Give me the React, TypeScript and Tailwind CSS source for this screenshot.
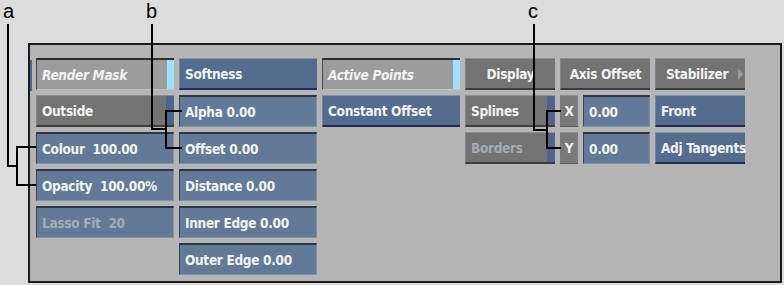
import React from "react";

type Kind = "field" | "button" | "gray" | "grayField" | "label";

function Cell({
  text,
  kind,
  w,
  italic,
  dim,
  strip,
  center,
  arrow,
}: {
  text: string;
  kind: Kind;
  w: string;
  italic?: boolean;
  dim?: boolean;
  strip?: "cyan" | "blue";
  center?: boolean;
  arrow?: boolean;
}) {
  const base =
    kind === "field"
      ? "bg-[#627a97] border-t-2 border-l border-t-[#30363f] border-l-[#3c4350] border-b border-r border-b-[#7f92a9] border-r-[#7f92a9]"
      : kind === "button"
      ? "bg-[#546d8f] border-t border-t-[#8194ae] border-b-2 border-b-[#262a58] border-l border-l-[#6f84a2]"
      : kind === "grayField"
      ? "bg-[#9c9c9c] border-t-2 border-l border-t-[#2e2e2e] border-l-[#4a4a4a] border-b border-b-[#c2c2c2]"
      : kind === "label"
      ? "bg-[#7a7a7a] border-t border-t-[#8c8c8c] border-b border-b-[#5a5a5a]"
      : "bg-[#737373] border-t border-t-[#8e8e8e] border-b-2 border-b-[#3e3e3e] border-l border-l-[#858585]";
  return (
    <div className={`relative flex h-[32px] items-center ${w} ${base}`}>
      <span
        className={`flex-1 whitespace-pre text-[13.5px] font-bold leading-[18px] tracking-[-0.3px] ${
          center ? "text-center" : "pl-[5px]"
        } ${italic ? "italic" : ""} ${dim ? "text-[#a3acb7]" : "text-[#f2f2f2]"}`}
        style={{ fontFamily: '"DejaVu Sans Condensed", "DejaVu Sans", sans-serif', fontStretch: "condensed" }}
      >
        {text}
      </span>
      {arrow && (
        <span className="mr-[2px] h-0 w-0 border-y-[6px] border-l-[5px] border-y-transparent border-l-[#9a9a9a]" />
      )}
      {strip === "cyan" && <div className="h-full w-[7px] bg-[#9fe2ff]" />}
      {strip === "blue" && <div className="h-full w-[8px] bg-[#4f6489]" />}
    </div>
  );
}

export default function App() {
  return (
    <div
      className="relative h-[285px] w-[784px] overflow-hidden bg-[#dcdcdc] pl-[28px] pt-[43px]"
      style={{ fontFamily: '"Liberation Sans", Arial, sans-serif' }}
    >
      <div className="relative flex h-[240px] w-[754px] gap-[5px] border-2 border-[#1b1b1b] bg-[#b5b5b5] pl-[6px] pt-[13px]">
        <div className="absolute left-0 top-[15px] h-[31px] w-[2px] bg-[#4f6489]" />

        <div className="flex flex-col gap-[5px]">
          <Cell text="Render Mask" kind="grayField" w="w-[138px]" italic strip="cyan" />
          <Cell text="Outside" kind="gray" w="w-[138px]" strip="blue" />
          <Cell text="Colour  100.00" kind="field" w="w-[138px]" />
          <Cell text="Opacity  100.00%" kind="field" w="w-[138px]" />
          <Cell text="Lasso Fit  20" kind="field" w="w-[138px]" dim />
        </div>

        <div className="flex flex-col gap-[5px]">
          <Cell text="Softness" kind="button" w="w-[138px]" />
          <Cell text="Alpha 0.00" kind="field" w="w-[138px]" />
          <Cell text="Offset 0.00" kind="field" w="w-[138px]" />
          <Cell text="Distance 0.00" kind="field" w="w-[138px]" />
          <Cell text="Inner Edge 0.00" kind="field" w="w-[138px]" />
          <Cell text="Outer Edge 0.00" kind="field" w="w-[138px]" />
        </div>

        <div className="flex flex-col gap-[5px]">
          <Cell text="Active Points" kind="grayField" w="w-[138px]" italic strip="cyan" />
          <Cell text="Constant Offset" kind="button" w="w-[138px]" />
        </div>

        <div className="flex flex-col gap-[5px]">
          <Cell text="Display" kind="gray" w="w-[90px]" center />
          <Cell text="Splines" kind="gray" w="w-[90px]" strip="blue" />
          <Cell text="Borders" kind="gray" w="w-[90px]" strip="blue" dim />
        </div>

        <div className="flex flex-col gap-[5px]">
          <Cell text="Axis Offset" kind="gray" w="w-[90px]" center />
          <div className="flex gap-[5px]">
            <Cell text="X" kind="label" w="w-[18px]" center />
            <Cell text="0.00" kind="field" w="w-[67px]" />
          </div>
          <div className="flex gap-[5px]">
            <Cell text="Y" kind="label" w="w-[18px]" center />
            <Cell text="0.00" kind="field" w="w-[67px]" />
          </div>
        </div>

        <div className="flex flex-col gap-[5px]">
          <Cell text="Stabilizer" kind="gray" w="w-[90px]" center arrow />
          <Cell text="Front" kind="button" w="w-[90px]" />
          <Cell text="Adj Tangents" kind="button" w="w-[90px]" />
        </div>
      </div>

      {/* callouts */}
      <span className="absolute left-[3px] top-0 text-[20px] leading-[22px] text-black">a</span>
      <span className="absolute left-[146px] top-0 text-[20px] leading-[22px] text-black">b</span>
      <span className="absolute left-[528px] top-0 text-[20px] leading-[22px] text-black">c</span>
      <svg className="pointer-events-none absolute left-0 top-0" width="784" height="285">
        <g fill="none" stroke="#000" strokeWidth="2">
          <polyline points="8,24 8,166 17,166" />
          <polyline points="36,147 17,147 17,185 36,185" />
          <polyline points="152,24 152,129 166,129" />
          <polyline points="182,111 166,111 166,148 182,148" />
          <polyline points="534,24 534,130 547,130" />
          <polyline points="561,111 547,111 547,148 561,148" />
        </g>
      </svg>
    </div>
  );
}
